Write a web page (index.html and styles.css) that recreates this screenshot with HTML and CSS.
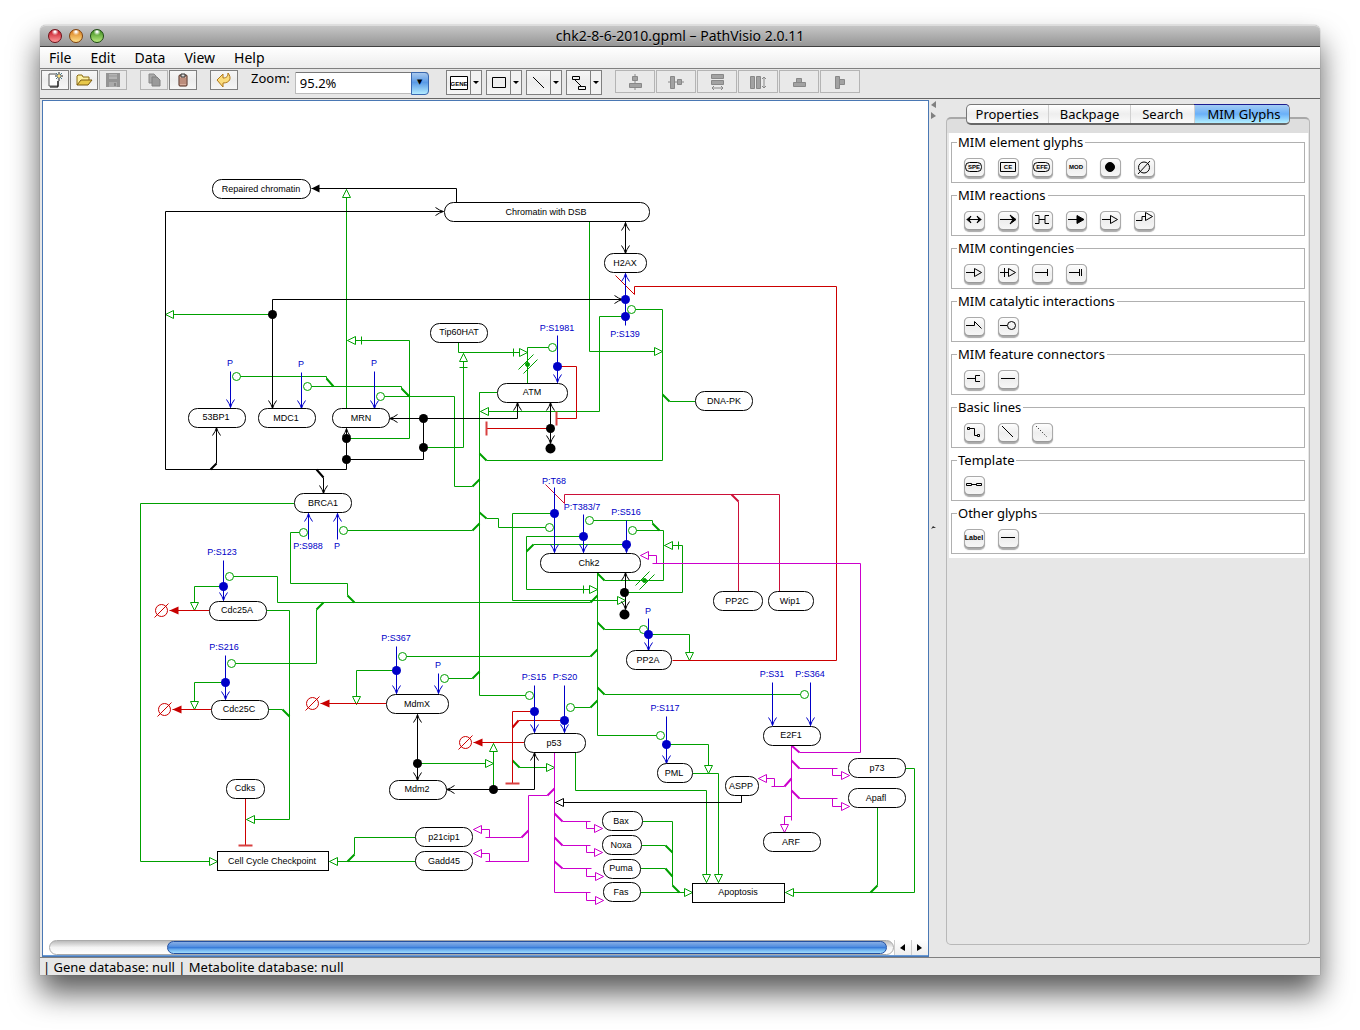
FILE: index.html
```html
<!DOCTYPE html>
<html lang="en">
<head>
<meta charset="utf-8">
<title>chk2-8-6-2010.gpml – PathVisio 2.0.11</title>
<link rel="stylesheet" href="styles.css">
</head>
<body>
<div class="window">
  <header class="titlebar">
    <div class="lights">
      <button class="light red" aria-label="Close"></button>
      <button class="light amber" aria-label="Minimize"></button>
      <button class="light lime" aria-label="Zoom window"></button>
    </div>
    <h1 class="title">chk2-8-6-2010.gpml – PathVisio 2.0.11</h1>
  </header>

  <nav class="menubar">
    <button class="menu">File</button>
    <button class="menu">Edit</button>
    <button class="menu">Data</button>
    <button class="menu">View</button>
    <button class="menu">Help</button>
  </nav>

  <div class="toolbar">
    <div class="group">
      <button class="tool" aria-label="New"><svg width="18" height="16" viewBox="0 0 18 16"><path d="M3 3h8v11H3z" fill="#fff"/><path d="M11 2H3v12M3 14h9V9" fill="none" stroke="#555"/><path d="M12 9v6H4" fill="none" stroke="#000"/><path d="M13 0v9M9 4h8" stroke="#222"/><path d="M10 1l6 6M16 1l-6 6" stroke="#4a7a8a"/><circle cx="13" cy="4" r="1.500" fill="#ffe27a"/></svg></button>
      <button class="tool" aria-label="Open"><svg width="18" height="16" viewBox="0 0 18 16"><path d="M2 13V4l1-1h4l1 2h6v3" fill="#fdf0a0" stroke="#8a6a10"/><path d="M2 13l4-5h11l-4 5z" fill="#e8c84a" stroke="#7a5a10"/></svg></button>
      <button class="tool" disabled aria-label="Save"><svg width="16" height="16" viewBox="0 0 16 16"><path d="M1 1h14v14H1z" fill="#949494"/><path d="M4 2h8v5H4z" fill="#b4b4b4"/><path d="M4 4h8" stroke="#999"/><path d="M4 10h8v5H4z" fill="#aaa"/><path d="M9 11h2v3H9z" fill="#888"/></svg></button>
    </div>
    <div class="group">
      <button class="tool" disabled aria-label="Copy"><svg width="16" height="16" viewBox="0 0 16 16"><path d="M3 2h5l2 2v7H3z" fill="#a8a8a8" stroke="#888"/><path d="M6 5h5l3 3v6H6z" fill="#9a9a9a" stroke="#808080"/></svg></button>
      <button class="tool" aria-label="Paste"><svg width="16" height="16" viewBox="0 0 16 16"><rect x="4" y="3" width="8" height="11" rx="1" fill="#d8b0a0" stroke="#4a2418"/><path d="M5 7h6M5 9h6M5 11h6" stroke="#a06a58"/><path d="M6 5V2h4v3z" fill="#ddd" stroke="#333"/></svg></button>
    </div>
    <div class="group">
      <button class="tool" aria-label="Undo"><svg width="18" height="16" viewBox="0 0 18 16"><path d="M2 8l6-6v4c4 0 5-2 5-5 4 5 2 10-5 10v4z" fill="#fbdc7c" stroke="#b07818"/></svg></button>
    </div>
    <div class="zoom">
      <label for="zoom">Zoom:</label>
      <span class="combo"><select id="zoom"><option>95.2%</option></select></span>
    </div>
    <div class="shapes">
      <div class="split"><button class="tool" aria-label="Gene"><svg width="18" height="18" viewBox="0 0 18 18"><path d="M.5 2.500h17v13H.5z" fill="#fff" stroke="#000"/><text x="9" y="12" class="genetext">GENE</text></svg></button><button class="drop" aria-label="More data nodes"></button></div>
      <div class="split"><button class="tool" aria-label="Rectangle"><svg width="18" height="18" viewBox="0 0 18 18"><path d="M2.500 3.500h13v10h-13z" fill="none" stroke="#000"/></svg></button><button class="drop" aria-label="More shapes"></button></div>
      <div class="split"><button class="tool" aria-label="Line"><svg width="18" height="18" viewBox="0 0 18 18"><path d="M3 3l11 11" stroke="#000"/></svg></button><button class="drop" aria-label="More lines"></button></div>
      <div class="split"><button class="tool" aria-label="Connector"><svg width="18" height="18" viewBox="0 0 18 18"><path d="M2.500 2.500h7v3h-7zM8.500 12.500h7v3h-7zM5 6l6 6" fill="none" stroke="#000"/></svg></button><button class="drop" aria-label="More connectors"></button></div>
    </div>
    <div class="aligns">
      <button class="tool" disabled aria-label="Align horizontal centers"><svg width="16" height="18" viewBox="0 0 16 18"><path d="M8 1v16" stroke="#888"/><path d="M5.500 3.500h5v4h-5zM2.500 10.500h12v4h-12z" fill="#a2a2a2" stroke="#888"/></svg></button>
      <button class="tool" disabled aria-label="Align vertical centers"><svg width="18" height="18" viewBox="0 0 18 18"><path d="M1 9h16" stroke="#888"/><path d="M3.500 3.500h4v12h-4zM10.500 6.500h4v5h-4z" fill="#a2a2a2" stroke="#888"/></svg></button>
      <button class="tool" disabled aria-label="Same width"><svg width="18" height="18" viewBox="0 0 18 18"><path d="M3.500 1.500h12v4h-12zM3.500 7.500h12v4h-12z" fill="#a2a2a2" stroke="#888"/><path d="M4 15h11M6 13l-2 2 2 2M13 13l2 2-2 2" fill="none" stroke="#888"/></svg></button>
      <button class="tool" disabled aria-label="Same height"><svg width="18" height="18" viewBox="0 0 18 18"><path d="M1.500 3.500h4v12h-4zM7.500 3.500h4v12h-4z" fill="#a2a2a2" stroke="#888"/><path d="M15 4v11M13 6l2-2 2 2M13 13l2 2 2-2" fill="none" stroke="#888"/></svg></button>
      <button class="tool" disabled aria-label="Stack vertically"><svg width="16" height="18" viewBox="0 0 16 18"><path d="M5.500 5.500h5v4h-5zM2.500 9.500h12v4h-12z" fill="#a2a2a2" stroke="#888"/></svg></button>
      <button class="tool" disabled aria-label="Stack horizontally"><svg width="16" height="18" viewBox="0 0 16 18"><path d="M3.500 3.500h4v12h-4zM7.500 6.500h5v5h-5z" fill="#a2a2a2" stroke="#888"/></svg></button>
    </div>
  </div>

  <main class="workspace">
    <section class="canvas">
      <div class="viewport">
        <svg class="pathway" width="885" height="836" viewBox="43 101 885 836" role="img" aria-label="Chk2 pathway">
          <defs>
            <marker id="open-k" class="k" markerUnits="userSpaceOnUse" markerWidth="20" markerHeight="20" viewBox="-10 -10 20 20" orient="auto-start-reverse"><path d="M-8-4L-4-1.500 0 0-4 1.500-8 4"/></marker>
            <marker id="open-b" class="b" markerUnits="userSpaceOnUse" markerWidth="20" markerHeight="20" viewBox="-10 -10 20 20" orient="auto"><path d="M-8-4L-4-1.500 0 0-4 1.500-8 4"/></marker>
            <marker id="solid-k" markerUnits="userSpaceOnUse" markerWidth="20" markerHeight="20" viewBox="-10 -10 20 20" orient="auto"><path d="M0 0L-8-4V4z" fill="#000"/></marker>
            <marker id="solid-r" markerUnits="userSpaceOnUse" markerWidth="20" markerHeight="20" viewBox="-10 -10 20 20" orient="auto"><path d="M0 0L-9-4V4z" fill="#c80000"/></marker>
            <marker id="tri-k" class="k hollow" markerUnits="userSpaceOnUse" markerWidth="20" markerHeight="20" viewBox="-10 -10 20 20" orient="auto"><path d="M0 0L-8-4V4z"/></marker>
            <marker id="tri-g" class="g hollow" markerUnits="userSpaceOnUse" markerWidth="20" markerHeight="20" viewBox="-10 -10 20 20" orient="auto"><path d="M0 0L-8-4V4z"/></marker>
            <marker id="tri-m" class="m hollow" markerUnits="userSpaceOnUse" markerWidth="20" markerHeight="20" viewBox="-10 -10 20 20" orient="auto"><path d="M0 0L-8-4V4z"/></marker>
            <marker id="need-g" class="g hollow" markerUnits="userSpaceOnUse" markerWidth="32" markerHeight="20" viewBox="-16 -10 32 20" orient="auto"><path d="M0 0L-8-4V4zM-14-4V4"/></marker>
            <marker id="cat-g" class="g hollow" markerUnits="userSpaceOnUse" markerWidth="20" markerHeight="20" viewBox="-10 -10 20 20"><circle r="4"/></marker>
            <marker id="stop-r" markerUnits="userSpaceOnUse" markerWidth="20" markerHeight="20" viewBox="-10 -10 20 20" orient="auto"><path d="M0-7V7" stroke="#d84040" stroke-width="2"/></marker>
            <g id="null-set"><circle r="6"/><path d="M-7 7L7-7"/></g>
          </defs>
          <g transform="translate(.5 .5)">
            <g class="g">
              <path d="M236 376H326V378L333 386M307 386H401V388L408 396M380 396H454V486H472"/>
              <path d="M597 572V735H660M663 530V580H604M479 453V392H497M632 530H663M589 520H652V523"/>
              <path d="M695 401H669M277 576V602H590M231 663H316V609M303 532H290V583H347V595M343 530H472"/>
              <path d="M268 709H282M402 656H590M444 678H472M804 694H604M643 629H604M570 707H590M549 527H498V518H486M626 544H533"/>
              <path d="M229 576H277M641 845H665M640 868H665M877 807V885M415 837H354V854M640 892H692M631 309H662V460H486"/>
              <g marker-end="url(#tri-g)">
                <path d="M346 408V189"/><path d="M272 314H165"/><path d="M625 316H599V411H480"/><path d="M589 221V351H662"/>
                <path d="M294 503H140V861H217"/><path d="M223 586H194V610"/><path d="M225 682H194V709"/><path d="M266 610H289V819H246"/>
                <path d="M396 670H356V704"/><path d="M417 763H493"/><path d="M493 789V743"/><path d="M512 760L519 767H554"/>
                <path d="M575 752V790H706V882"/><path d="M692 773H718V882"/><path d="M666 744H708V773"/><path d="M648 634H689V660"/>
                <path d="M554 513H512V600H625"/><path d="M642 821H672V885L679 892H692"/><path d="M905 768H914V892H785"/><path d="M415 861H329"/>
              </g>
              <g marker-end="url(#need-g)">
                <path d="M346 438H409V340H347"/><path d="M423 447H463V353"/><path d="M458 342V352H527"/><path d="M583 536H526V589H597"/><path d="M625 592H682V545H664"/>
              </g>
              <g marker-end="url(#cat-g)">
                <path d="M240 376H236"/><path d="M311 386H307"/><path d="M384 396H380"/><path d="M527 383V347H552"/><path d="M479 392V695H529"/>
                <path d="M635 309H631"/><path d="M299 532H303"/><path d="M347 530H343"/><path d="M233 576H229"/><path d="M235 663H231"/>
                <path d="M406 656H402"/><path d="M448 678H444"/><path d="M656 735H660"/><path d="M800 694H804"/><path d="M639 629H643"/>
                <path d="M574 707H570"/><path d="M545 527H549"/><path d="M593 520H589"/><path d="M636 530H632"/>
              </g>
              <path class="stub" d="M326 378l7 8M401 388l8 8M472 486l7-7M486 460l-7-7M669 401l-7-7M347 595l7 7M472 530l7-7M590 602l7-7M316 609l7-7M282 709l7 7M590 656l7-7M472 678l7-7M604 694l-7-7M604 629l-7-7M590 707l7-7M486 518l-7-6M533 544l-7 7M652 523l7 7M604 580l-7-7M672 885l7 7M665 845l7 7M665 868l7 8M877 885l-7 7M354 854l-7 7M512 760l7 7"/>
              <path d="M518 369l15-15M523 373l14-14M635 585l14-14M639 589l15-15"/>
              <g fill="#00a000"><circle cx="527" cy="364" r="2"/><circle cx="644" cy="580" r="2"/></g>
            </g>

            <g class="r">
              <path d="M672 660H836V286H634V294L615 275"/>
              <path class="crimson" d="M779 591V494H564V503L545 484M738 591V501"/>
              <path class="crimson stub" d="M738 501l-7-7"/>
              <path d="M564 720H518"/><path class="stub" d="M518 720l-6 7"/>
              <g marker-end="url(#stop-r)"><path d="M557 366H576V418H556"/><path d="M550 428H486"/><path d="M534 711H512V783"/><path d="M245 798V845"/></g>
              <g marker-end="url(#solid-r)"><path d="M209 610H169"/><path d="M211 709H172"/><path d="M386 703H320"/><path d="M524 742H473"/></g>
              <use href="#null-set" x="161" y="610"/><use href="#null-set" x="164" y="709"/><use href="#null-set" x="312" y="703"/><use href="#null-set" x="465" y="742"/>
            </g>

            <g class="m">
              <path d="M799 752H860V563H652M791 745V820M799 768H837M799 798H837M784 786H771M554 752V892H590M562 821H590M562 845H590M562 868H591M547 795H528V861H485M521 837H485"/>
              <path class="stub" d="M791 745l8 7M791 760l8 8M791 790l8 8M791 778l-7 8M554 813l8 8M554 837l8 8M554 861l8 7M554 788l-7 7M528 830l-7 7"/>
              <g marker-end="url(#tri-m)">
                <path d="M656 563V555H640"/><path d="M791 816H784V832"/><path d="M832 768V775H849"/><path d="M832 798V806H849"/><path d="M774 786V778H758"/>
                <path d="M586 892V900H603"/><path d="M586 821V828H602"/><path d="M586 845V852H602"/><path d="M586 868V876H603"/><path d="M489 861V853H473"/><path d="M489 837V829H473"/>
              </g>
            </g>

            <g class="k">
              <path d="M456 202V188H311" marker-end="url(#solid-k)"/>
              <path d="M741 795V802H555" marker-end="url(#tri-k)"/>
              <path d="M346 459H423V418"/>
              <g marker-start="url(#open-k)" marker-end="url(#open-k)">
                <path d="M443 211H165V469H346V428"/><path d="M389 418H517V402"/><path d="M272 408V299H622"/><path d="M625 222V253"/>
                <path d="M550 402V443"/><path d="M417 714V780"/><path d="M534 752V789H446"/><path d="M625 572V609"/>
              </g>
              <g marker-end="url(#open-k)"><path d="M216 463V427"/><path d="M323 477V493"/></g>
              <path class="stub" d="M210 469l6-6M316 469l7 8"/>
            </g>

            <g class="b" marker-end="url(#open-b)">
              <path d="M625 325V273"/><path d="M230 371V407"/><path d="M301 372V408"/><path d="M374 371V408"/><path d="M557 335V382"/>
              <path d="M308 539V513"/><path d="M337 539V513"/><path d="M223 560V600"/><path d="M225 655V699"/><path d="M396 646V693"/><path d="M438 673V693"/>
              <path d="M534 685V732"/><path d="M564 685V732"/><path d="M666 716V763"/><path d="M554 487V552"/><path d="M583 514V552"/><path d="M626 520V552"/>
              <path d="M648 618V650"/><path d="M772 682V725"/><path d="M810 682V725"/>
            </g>

            <g fill="#0000c8">
              <circle cx="625" cy="299" r="4.500"/><circle cx="625" cy="316" r="4.500"/><circle cx="557" cy="366" r="4.500"/><circle cx="223" cy="586" r="4.500"/>
              <circle cx="225" cy="682" r="4.500"/><circle cx="396" cy="670" r="4.500"/><circle cx="534" cy="711" r="4.500"/><circle cx="564" cy="720" r="4.500"/>
              <circle cx="666" cy="744" r="4.500"/><circle cx="554" cy="513" r="4.500"/><circle cx="583" cy="536" r="4.500"/><circle cx="626" cy="544" r="4.500"/><circle cx="648" cy="634" r="4.500"/>
            </g>
            <g fill="#000">
              <circle cx="272" cy="314" r="4.500"/><circle cx="346" cy="438" r="4.500"/><circle cx="346" cy="459" r="4.500"/><circle cx="423" cy="418" r="4.500"/><circle cx="423" cy="447" r="4.500"/>
              <circle cx="550" cy="428" r="4.500"/><circle cx="550" cy="448" r="5"/><circle cx="417" cy="763" r="4.500"/><circle cx="493" cy="789" r="4.500"/><circle cx="624" cy="592" r="4.500"/><circle cx="624" cy="614" r="5"/>
            </g>

            <g class="node">
              <rect x="212" y="179" width="98" height="19" rx="9"/>
              <rect x="444" y="202" width="205" height="19" rx="9"/>
              <rect x="604" y="253" width="42" height="19" rx="9"/>
              <rect x="430" y="323" width="57" height="19" rx="9"/>
              <rect x="497" y="383" width="70" height="19" rx="9"/>
              <rect x="695" y="391" width="57" height="19" rx="9"/>
              <rect x="188" y="408" width="57" height="19" rx="9"/>
              <rect x="258" y="408" width="57" height="19" rx="9"/>
              <rect x="332" y="408" width="57" height="19" rx="9"/>
              <rect x="294" y="493" width="57" height="19" rx="9"/>
              <rect x="209" y="601" width="57" height="19" rx="9"/>
              <rect x="211" y="700" width="57" height="19" rx="9"/>
              <rect x="386" y="694" width="62" height="19" rx="9"/>
              <rect x="389" y="780" width="57" height="19" rx="9"/>
              <rect x="226" y="779" width="38" height="19" rx="9"/>
              <rect x="217" y="851" width="111" height="19"/>
              <rect x="415" y="827" width="57" height="19" rx="9"/>
              <rect x="415" y="851" width="57" height="19" rx="9"/>
              <rect x="524" y="733" width="61" height="19" rx="9"/>
              <rect x="540" y="553" width="100" height="19" rx="9"/>
              <rect x="713" y="591" width="49" height="19" rx="9"/>
              <rect x="768" y="591" width="45" height="19" rx="9"/>
              <rect x="626" y="650" width="45" height="19" rx="9"/>
              <rect x="657" y="763" width="35" height="19" rx="9"/>
              <rect x="602" y="811" width="40" height="19" rx="9"/>
              <rect x="602" y="835" width="39" height="19" rx="9"/>
              <rect x="603" y="859" width="37" height="19" rx="9"/>
              <rect x="603" y="882" width="37" height="19" rx="9"/>
              <rect x="692" y="883" width="92" height="19"/>
              <rect x="763" y="726" width="57" height="19" rx="9"/>
              <rect x="848" y="758" width="57" height="19" rx="9"/>
              <rect x="848" y="788" width="57" height="19" rx="9"/>
              <rect x="763" y="832" width="57" height="19" rx="9"/>
              <rect x="725" y="776" width="33" height="19" rx="9"/>
            </g>
          </g>
          <g class="name">
            <text x="261" y="192">Repaired chromatin</text><text x="546" y="215">Chromatin with DSB</text><text x="625" y="266">H2AX</text><text x="459" y="335">Tip60HAT</text>
            <text x="532" y="395">ATM</text><text x="724" y="404">DNA-PK</text><text x="216" y="420">53BP1</text><text x="286" y="421">MDC1</text>
            <text x="361" y="421">MRN</text><text x="323" y="506">BRCA1</text><text x="237" y="613">Cdc25A</text><text x="239" y="712">Cdc25C</text>
            <text x="417" y="707">MdmX</text><text x="417" y="792">Mdm2</text><text x="245" y="791">Cdks</text><text x="272" y="864">Cell Cycle Checkpoint</text>
            <text x="444" y="840">p21cip1</text><text x="444" y="864">Gadd45</text><text x="554" y="746">p53</text><text x="589" y="566">Chk2</text>
            <text x="737" y="604">PP2C</text><text x="790" y="604">Wip1</text><text x="648" y="663">PP2A</text><text x="674" y="776">PML</text>
            <text x="621" y="824">Bax</text><text x="621" y="848">Noxa</text><text x="621" y="871">Puma</text><text x="621" y="895">Fas</text>
            <text x="738" y="895">Apoptosis</text><text x="791" y="738">E2F1</text><text x="877" y="771">p73</text><text x="876" y="801">Apafl</text>
            <text x="791" y="845">ARF</text><text x="741" y="789">ASPP</text>
          </g>
          <g class="site">
            <text x="230" y="366">P</text><text x="301" y="367">P</text><text x="374" y="366">P</text><text x="557" y="331">P:S1981</text><text x="625" y="337">P:S139</text>
            <text x="554" y="484">P:T68</text><text x="582" y="510">P:T383/7</text><text x="626" y="515">P:S516</text><text x="308" y="549">P:S988</text><text x="337" y="549">P</text>
            <text x="222" y="555">P:S123</text><text x="224" y="650">P:S216</text><text x="396" y="641">P:S367</text><text x="438" y="668">P</text><text x="534" y="680">P:S15</text>
            <text x="565" y="680">P:S20</text><text x="665" y="711">P:S117</text><text x="772" y="677">P:S31</text><text x="810" y="677">P:S364</text><text x="648" y="614">P</text>
          </g>
        </svg>
      </div>
      <div class="scrollbar">
        <div class="track"><div class="thumb"></div></div>
        <button class="step" aria-label="Scroll left"><svg width="6" height="8"><path d="M5 0v7L0 4z"/></svg></button>
        <button class="step" aria-label="Scroll right"><svg width="6" height="8"><path d="M0 0v7l5-3z"/></svg></button>
      </div>
    </section>

    <div class="splitter">
      <svg width="6" height="20"><path d="M5 0v7L0 4zM0 11v7l5-3z" fill="#808080"/></svg>
      <svg class="grip" width="6" height="6"><path d="M0 4l2-3 3 2-3 0z" fill="#333"/></svg>
    </div>

    <aside class="side">
      <div class="tabs" role="tablist">
        <button class="tab" role="tab">Properties</button>
        <button class="tab" role="tab">Backpage</button>
        <button class="tab" role="tab">Search</button>
        <button class="tab active" role="tab" aria-selected="true">MIM Glyphs</button>
      </div>
      <div class="tabpane">
        <div class="palette">
          <fieldset><legend>MIM element glyphs</legend><div class="glyphs">
            <button class="glyph" aria-label="Simple physical entity"><svg viewBox="0 0 21 20"><rect x="1.500" y="4.500" width="16" height="9" rx="4"/><text x="10" y="11">SPE</text></svg></button>
            <button class="glyph" aria-label="Conceptual entity"><svg viewBox="0 0 21 20"><path d="M2.500 4.500h15v9h-15z"/><text x="10" y="11">CE</text></svg></button>
            <button class="glyph" aria-label="Entity feature"><svg viewBox="0 0 21 20"><rect x="1.500" y="4.500" width="16" height="9" rx="4"/><text x="10" y="11">EFE</text></svg></button>
            <button class="glyph" aria-label="Modifier"><svg viewBox="0 0 21 20"><text x="10" y="11">MOD</text></svg></button>
            <button class="glyph" aria-label="Interaction node"><svg viewBox="0 0 21 20"><circle cx="10" cy="9" r="4.500" fill="#000"/></svg></button>
            <button class="glyph" aria-label="Degradation"><svg viewBox="0 0 21 20"><circle cx="10" cy="9.500" r="5.500"/><path d="M4 16L16 3"/></svg></button>
          </div></fieldset>
          <fieldset><legend>MIM reactions</legend><div class="glyphs">
            <button class="glyph" aria-label="Non-covalent binding"><svg viewBox="0 0 21 20"><path d="M2.500 8.500h15M7 5L3 8.500 7 12 5 8.500zM13 5l4 3.500L13 12l2-3.500z" fill="#000"/></svg></button>
            <button class="glyph" aria-label="Covalent modification"><svg viewBox="0 0 21 20"><path d="M2 8.500h15M12 4l6 4.500-6 4.500 3-4.500z" fill="#000"/></svg></button>
            <button class="glyph" aria-label="Covalent bond"><svg viewBox="0 0 21 20"><path d="M3 4.500h4v8H3M7 8.500h6M17 4.500h-4v8h4"/></svg></button>
            <button class="glyph" aria-label="Conversion"><svg viewBox="0 0 21 20"><path d="M2 8.500h10M11 4.500v8l7-4z" fill="#000"/></svg></button>
            <button class="glyph" aria-label="Stoichiometric conversion"><svg viewBox="0 0 21 20"><path d="M2 8.500h8M10.500 4.500v8l7-4z"/></svg></button>
            <button class="glyph" aria-label="Transcription-translation"><svg viewBox="0 0 21 20"><path d="M2 9.500h6v-4h3M11.500 1.500v8l7-4z"/></svg></button>
          </div></fieldset>
          <fieldset><legend>MIM contingencies</legend><div class="glyphs">
            <button class="glyph" aria-label="Stimulation"><svg viewBox="0 0 21 20"><path d="M2 8.500h8M10.500 4.500v8l7-4z"/></svg></button>
            <button class="glyph" aria-label="Necessary stimulation"><svg viewBox="0 0 21 20"><path d="M2 8.500h8M6.500 4v9M10.500 4.500v8l7-4z"/></svg></button>
            <button class="glyph" aria-label="Inhibition"><svg viewBox="0 0 21 20"><path d="M3 8.500h12M15.500 5v7"/></svg></button>
            <button class="glyph" aria-label="Absolute inhibition"><svg viewBox="0 0 21 20"><path d="M3 8.500h10M13.500 5v7M15.500 5v7"/></svg></button>
          </div></fieldset>
          <fieldset><legend>MIM catalytic interactions</legend><div class="glyphs">
            <button class="glyph" aria-label="Cleavage"><svg viewBox="0 0 21 20"><path d="M2 8.500h8.500v-4l7 7"/></svg></button>
            <button class="glyph" aria-label="Catalysis"><svg viewBox="0 0 21 20"><path d="M2 8.500h7"/><circle cx="13.500" cy="8.500" r="4"/></svg></button>
          </div></fieldset>
          <fieldset><legend>MIM feature connectors</legend><div class="glyphs">
            <button class="glyph" aria-label="Branching"><svg viewBox="0 0 21 20"><path d="M3 8.500h8M16 5.500h-4.500v6H16"/></svg></button>
            <button class="glyph" aria-label="Plain connector"><svg viewBox="0 0 21 20"><path d="M3 8.500h14"/></svg></button>
          </div></fieldset>
          <fieldset><legend>Basic lines</legend><div class="glyphs">
            <button class="glyph" aria-label="Elbow line"><svg viewBox="0 0 21 20"><path d="M3.500 4.500h2v2h-2zM6 5.500h4.500v7H13M13.500 11.500h2v2h-2z"/></svg></button>
            <button class="glyph" aria-label="Line"><svg viewBox="0 0 21 20"><path d="M4 3l11 11"/></svg></button>
            <button class="glyph" aria-label="Dotted line"><svg viewBox="0 0 21 20"><path d="M4 3l11 11" stroke-dasharray="1 2"/></svg></button>
          </div></fieldset>
          <fieldset><legend>Template</legend><div class="glyphs">
            <button class="glyph" aria-label="Reaction template"><svg viewBox="0 0 21 20"><path d="M2.500 7.500h5v2h-5zM8 8.500h4M12.500 7.500h5v2h-5z"/></svg></button>
          </div></fieldset>
          <fieldset><legend>Other glyphs</legend><div class="glyphs">
            <button class="glyph" aria-label="Label"><svg viewBox="0 0 21 20"><text x="10" y="11" class="labeltext">Label</text></svg></button>
            <button class="glyph" aria-label="Line glyph"><svg viewBox="0 0 21 20"><path d="M3 8.500h14"/></svg></button>
          </div></fieldset>
        </div>
      </div>
    </aside>
  </main>

  <footer class="status">| Gene database: null | Metabolite database: null</footer>
</div>
</body>
</html>
```
FILE: styles.css
```css
* { box-sizing: border-box; }

body {
  display: flex;
  flex-direction: column;
  min-height: 100vh;
  margin: 0;
  overflow-x: hidden;
  background: #fff;
  color: #000;
  font: 13px/16px "Noto Sans", sans-serif;
}

button {
  margin: 0;
  padding: 0;
  border: 0;
  background: none;
  color: inherit;
  font: inherit;
}

svg { display: block; }

.window {
  display: flex;
  flex: 1;
  flex-direction: column;
  margin: 25px 40px 55px;
  border-radius: 6px 6px 0 0;
  background: #e7e7e7;
  box-shadow: 0 0 1px #555, 0 18px 30px rgba(0, 0, 0, .65);
}

/* title bar */
.titlebar {
  display: grid;
  grid-template-columns: 80px 1fr 80px;
  align-items: center;
  height: 22px;
  border-top: 1px solid #ddd;
  border-bottom: 1px solid #404040;
  border-radius: 6px 6px 0 0;
  background: linear-gradient(#c6c6c6, #969696);
}

.lights { display: flex; gap: 7px; padding-left: 8px; }

.light {
  width: 14px;
  height: 14px;
  border: 1px solid #444;
  border-radius: 50%;
}

.red { background: radial-gradient(circle at 50% 15%, #fff 5%, transparent 30%), linear-gradient(#c01020, #ff9a9a); border-color: #701018; }
.amber { background: radial-gradient(circle at 50% 15%, #fff 5%, transparent 30%), linear-gradient(#d87818, #ffe08a); border-color: #80420c; }
.lime { background: radial-gradient(circle at 50% 15%, #fff 5%, transparent 30%), linear-gradient(#3a8a1c, #b8ea80); border-color: #1c4a10; }

.title {
  margin: 0;
  font-size: 14px;
  font-weight: 400;
  text-align: center;
  text-shadow: 0 1px 0 rgba(255, 255, 255, .4);
}

/* menus */
.menubar {
  display: flex;
  gap: 19px;
  height: 22px;
  padding: 0 9px;
  border-bottom: 1px solid #808080;
  background: linear-gradient(#fff, #ececec);
  font-size: 14px;
}

/* toolbar */
.toolbar {
  display: flex;
  align-items: flex-start;
  height: 30px;
  padding: 1px 1px 0;
  border-bottom: 1px solid #666;
  background: #e7e7e7;
}

.group { display: flex; gap: 1px; margin-right: 13px; }

.tool {
  display: flex;
  align-items: center;
  justify-content: center;
  width: 28px;
  height: 20px;
  border: 1px solid #808080;
  background: linear-gradient(#f6f6f6, #ededed 50%, #f6f6f6);
}

.tool:disabled { border-color: #b4b4b4; background: #e9e9e9; }

.zoom { display: flex; gap: 5px; width: 195px; }

.combo { position: relative; margin-top: 2px; }

.combo select {
  width: 134px;
  height: 22px;
  padding: 0 4px;
  border: 1px solid #bbb;
  border-top: 1px solid #777;
  border-radius: 0 4px 4px 0;
  appearance: none;
  background: #fff;
  color: #000;
  font: inherit;
}

.combo::after {
  position: absolute;
  top: 0;
  right: 0;
  width: 16px;
  height: 21px;
  border: 1px solid #3a68b0;
  border-radius: 0 4px 4px 0;
  background: linear-gradient(#a8c8ee, #5a9ae6 45%, #b4ecff);
  color: #000;
  font: 7px/18px "DejaVu Sans", sans-serif;
  text-align: center;
  content: "▼";
  pointer-events: none;
}

.shapes { display: flex; gap: 4px; margin-right: 13px; }
.split { display: flex; }
.split .tool { width: 25px; height: 25px; }

.drop {
  display: flex;
  align-items: center;
  justify-content: center;
  width: 11px;
  height: 25px;
  border: 1px solid #808080;
  border-left: 0;
  background: #f2f2f2;
}

.drop::before {
  border: 3px solid transparent;
  border-top-color: #000;
  border-bottom: 0;
  content: "";
}

.aligns { display: flex; gap: 1px; }
.aligns .tool { width: 40px; height: 23px; }

.genetext {
  font: bold 6px "Liberation Sans", sans-serif;
  text-anchor: middle;
}

/* workspace */
.workspace { display: flex; flex: 1; }

.canvas {
  display: flex;
  flex: 1;
  flex-direction: column;
  min-width: 0;
  margin: 1px 0 0 2px;
  border: 1px solid #4a78b4;
  background: #fff;
}

.viewport { flex: 1; overflow: hidden; }

.scrollbar {
  display: flex;
  height: 16px;
  border-bottom: 1px solid #6a9ad4;
}

.track {
  flex: 1;
  min-width: 0;
  margin-left: 6px;
  padding: 0 6px 0 117px;
  border: 1px solid #aaa;
  border-radius: 8px;
  background: linear-gradient(#bbb, #f4f4f4 50%, #fff);
}

.thumb {
  height: 100%;
  border: 1px solid #2450a0;
  border-radius: 7px;
  background: linear-gradient(#88aee4, #5590e0 40%, #3a7cd8 50%, #6cb0f0 70%, #a0dcfc);
}

.step {
  display: flex;
  align-items: center;
  justify-content: center;
  width: 17px;
  border-left: 1px solid #ccc;
  background: linear-gradient(#fff, #eee);
}

.splitter {
  display: flex;
  flex-direction: column;
  width: 9px;
  padding: 2px 2px 0;
}

.grip { margin-top: 404px; }

.side {
  display: flex;
  flex-direction: column;
  width: 382px;
  padding: 5px 10px 12px 8px;
}

/* tabs sit across the top edge of the pane */
.tabs {
  position: relative;
  display: flex;
  align-self: center;
  height: 21px;
  border: 1px solid #777;
  border-bottom: 2px solid #666;
  border-radius: 5px;
  background: linear-gradient(#fff, #eee 50%, #fafafa);
}

.tab { padding: 0 11px; border-left: 1px solid #d0d0d0; }
.tab:first-child { padding: 0 9px; border-left: 0; }

.tab.active {
  padding: 0 9px 0 12px;
  border-radius: 0 4px 4px 0;
  background: linear-gradient(#a4ccf4, #6ab0f8 50%, #b4f0ff);
  box-shadow: 0 -1px 0 #1c1c90;
}

.tabpane {
  flex: 1;
  margin-top: -8px;
  padding: 14px 1px 0 2px;
  border: 1px solid #b8b8b8;
  border-top: 2px solid #a8a8a8;
  border-radius: 5px;
  background: linear-gradient(#dedede, #dedede 14px, #e7e7e7 14px);
}

.palette {
  display: flex;
  flex-direction: column;
  gap: 4px;
  padding: 1px 3px 4px 2px;
  background: #fff;
}

fieldset {
  min-width: 0;
  margin: 0;
  padding: 8px 4px 4px 5px;
  border: 1px solid #b0b0b0;
}

legend { height: 16px; padding: 0 2px 0 1px; }

.glyphs { display: flex; gap: 13px; padding-left: 7px; }

.glyph {
  width: 21px;
  height: 20px;
  border-radius: 5px;
  background: linear-gradient(#fff, #eee 50%, #f8f8f8);
  box-shadow: inset 0 0 0 1px #aaa, inset 0 -1px 0 1px #999, 0 1px 1px #aaa;
}

.glyph svg {
  width: 21px;
  height: 20px;
  fill: none;
  stroke: #000;
}

.glyph text {
  fill: #000;
  stroke: none;
  font: bold 6px "Liberation Sans", sans-serif;
  text-anchor: middle;
}

.glyph .labeltext { font-size: 7px; }

.status {
  height: 18px;
  padding: 1px 3px;
  border-top: 1px solid #808080;
}

/* pathway drawing */
.g, .r, .m, .k, .b { fill: none; }
.g { stroke: #00a000; }
.r { stroke: #cc0000; }
.m { stroke: #cc00cc; }
.k { stroke: #000; }
.b { stroke: #0000c8; }
.crimson { stroke: #cc1038; }
.stub { stroke-width: 2; }
.hollow { fill: #fff; }
marker { overflow: visible; }

.node rect { fill: #fff; stroke: #000; }

.name text, .site text {
  font: 9px "Liberation Sans", Arial, sans-serif;
  text-anchor: middle;
}

.site text { fill: #0000c8; }
```
